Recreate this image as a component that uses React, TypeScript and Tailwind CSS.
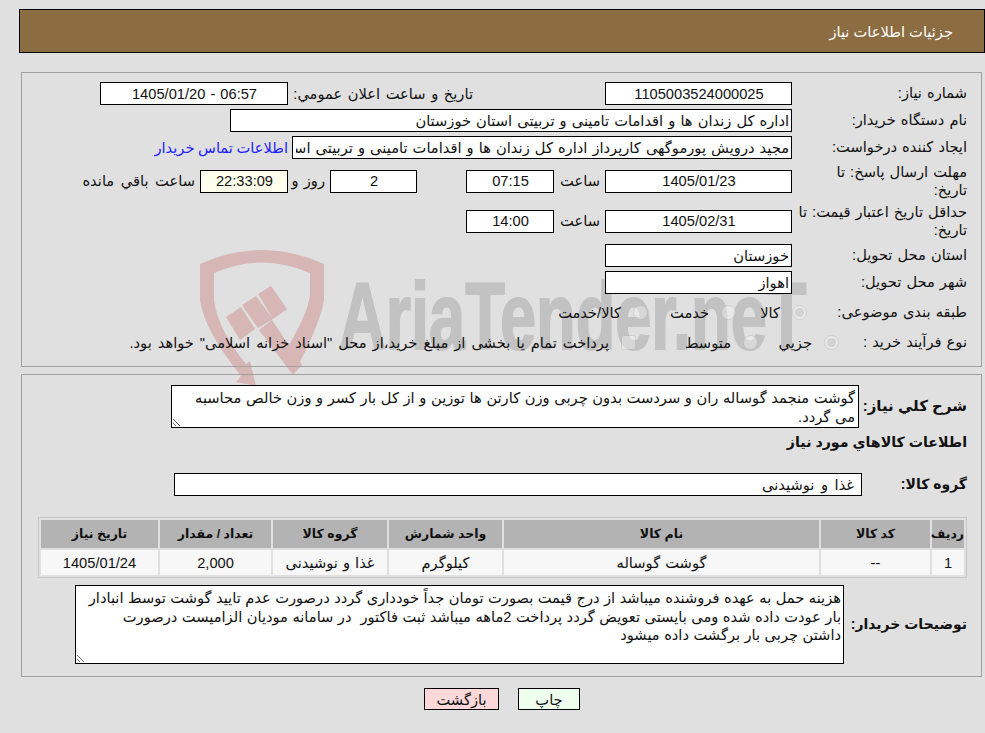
const font = "font-['Liberation_Sans','DejaVu_Sans',sans-serif]";
const box = "h-[23px] border border-black text-[14.67px] text-[#111] outline-none pl-[3px] pr-[2px] rounded-none [word-spacing:1px]";

function Box({ w, value, center = true, yellow = false, mr = "", ltr = false }: { w: string; value: string; center?: boolean; yellow?: boolean; mr?: string; ltr?: boolean }) {
  return (
    <input
      readOnly
      dir={ltr ? "ltr" : "rtl"}
      value={value}
      className={`${box} ${w} ${mr} ${center ? "text-center" : "text-right"} ${yellow ? "bg-[#ffffee]" : "bg-white"}`}
    />
  );
}

function Label({ children, w = "w-[175px]" }: { children: React.ReactNode; w?: string }) {
  return <div className={`${w} shrink-0 leading-[18.5px] pl-[5px]`}>{children}</div>;
}

function Radio({ checked = false }: { checked?: boolean }) {
  return <input type="radio" disabled checked={checked} readOnly className="m-0 h-[15px] w-[15px] shrink-0 opacity-60" />;
}

function Watermark() {
  return (
    <div className="absolute left-0 top-0 z-0 h-[420px] w-[985px] overflow-hidden">
      <svg className="absolute left-[190px] top-[240px]" width="140" height="160" viewBox="190 240 140 160" fill="#d7b6b6">
        <path d="M200 264 Q262 236 324 264 L324 300 Q320 325 293 375 L281 358 Q308 315 310 295 L310 273 Q262 252 214 273 L214 300 Q218 330 246 364 L250 361 L256 386 L236 382 L241 376 Q204 330 200 300 Z" />
        <path d="M226 317 L241 307 L255 329 L240 340 Z" />
        <path d="M242 305 L256 296 L273 319 L258 328 Z" />
        <path d="M258 294 L271 286 L287 309 L273 319 Z" />
        <path d="M259 330 L272 320 L302 365 L293 375 Z" />
      </svg>
      <div dir="ltr" className="absolute left-[339px] top-[252px] origin-left scale-x-[0.69] whitespace-nowrap font-['Liberation_Sans'] text-[94px] font-bold leading-[130px] text-[#c2c2c2] [-webkit-text-stroke:2px_#c2c2c2]">
        AriaTender.neT
      </div>
    </div>
  );
}

export default function App() {
  return (
    <div dir="rtl" className={`relative min-h-[733px] w-[985px] overflow-hidden bg-[#e0e0e0] pt-[9px] text-[14.67px] text-[#111] [word-spacing:1px] ${font}`}>
      <Watermark />
      <div className="relative z-10">
        <div className="ml-[19px] flex h-[44px] items-center border border-black bg-[#8c6d42] pr-[31px] pt-[1px] text-white [word-spacing:0px]">
          جزئيات اطلاعات نياز
        </div>

        <section className="ml-[21px] mr-[3px] mt-[19px] h-[295px] border border-[#a0a0a0] pr-[14px] pt-[9px]">
          <div className="flex h-[23px] items-center">
            <Label>شماره نياز:</Label>
            <Box w="w-[187px]" value="1105003524000025" />
            <div className="mr-[132px] w-[180px] whitespace-nowrap [word-spacing:1.5px]">تاريخ و ساعت اعلان عمومي:</div>
            <Box w="w-[188px]" mr="mr-[5px]" ltr value="1405/01/20 - 06:57" />
          </div>
          <div className="mt-[4px] flex h-[23px] items-center">
            <Label>نام دستگاه خريدار:</Label>
            <Box w="w-[562px]" center={false} value="اداره کل زندان ها و اقدامات تامینی و تربیتی استان خوزستان" />
          </div>
          <div className="mt-[4px] flex h-[23px] items-center">
            <Label>ايجاد كننده درخواست:</Label>
            <Box w="w-[500px]" center={false} value="مجيد درويش پورموگهی کارپرداز اداره کل زندان ها و اقدامات تامینی و تربیتی استان خوزستان" />
            <a className="mr-[4px] text-[#2222ff] [word-spacing:-0.5px]">اطلاعات تماس خريدار</a>
          </div>
          <div className="mt-[4px] flex h-[36px] items-center">
            <Label>مهلت ارسال پاسخ: تا<br />تاريخ:</Label>
            <Box w="w-[187px]" value="1405/01/23" />
            <div className="mr-[5px] w-[46px]">ساعت</div>
            <Box w="w-[88px]" value="07:15" />
            <Box w="w-[87px]" mr="mr-[49px]" value="2" />
            <div className="mr-[5px] w-[37px]">روز و</div>
            <Box w="w-[88px]" yellow value="22:33:09" />
            <div className="mr-[5px] [word-spacing:2.5px]">ساعت باقي مانده</div>
          </div>
          <div className="mt-[4px] flex h-[36px] items-center">
            <Label>حداقل تاريخ اعتبار قيمت: تا<br />تاريخ:</Label>
            <Box w="w-[187px]" value="1405/02/31" />
            <div className="mr-[5px] w-[46px]">ساعت</div>
            <Box w="w-[88px]" value="14:00" />
          </div>
          <div className="mt-[5px] flex h-[23px] items-center">
            <Label>استان محل تحويل:</Label>
            <Box w="w-[187px]" center={false} value="خوزستان" />
          </div>
          <div className="mt-[4px] flex h-[23px] items-center">
            <Label>شهر محل تحويل:</Label>
            <Box w="w-[187px]" center={false} value="اهواز" />
          </div>
          <div className="mt-[7px] flex h-[23px] items-center">
            <Label w="w-[160px]"><span className="whitespace-nowrap">طبقه بندی موضوعی:</span></Label>
            <div className="flex w-[71px] items-center gap-[12px]"><Radio checked /><span>كالا</span></div>
            <div className="flex w-[88px] items-center gap-[12px]"><Radio /><span>خدمت</span></div>
            <div className="flex items-center gap-[12px]"><Radio /><span>كالا/خدمت</span></div>
          </div>
          <div className="mt-[7px] flex h-[23px] items-center">
            <Label w="w-[128px]"><span className="whitespace-nowrap">نوع فرآيند خريد :</span></Label>
            <div className="flex w-[81px] items-center gap-[12px]"><Radio checked /><span>جزيي</span></div>
            <div className="flex w-[122px] items-center gap-[12px]"><Radio /><span>متوسط</span></div>
            <div className="flex items-center gap-[12px]">
              <input type="checkbox" disabled className="m-0 h-[15px] w-[15px] shrink-0 opacity-60" />
              <span className="[word-spacing:1.9px]">پرداخت تمام يا بخشی از مبلغ خريد،از محل "اسناد خزانه اسلامی" خواهد بود.</span>
            </div>
          </div>
        </section>

        <section className="ml-[21px] mr-[3px] mt-[7px] h-[303px] border border-[#a0a0a0] pr-[14px] pt-[10px]">
          <div className="flex h-[43px] items-center">
            <div className="w-[108px] shrink-0 whitespace-nowrap text-[15px] font-bold [word-spacing:0px]">شرح كلي نياز:</div>
            <textarea
              readOnly
              dir="rtl"
              className="h-[43px] w-[688px] rounded-none border border-black bg-white pr-[3px] pl-[12px] pt-[3px] text-[14.67px] leading-[19px] text-[#111] outline-none [word-spacing:0.55px]"
              defaultValue="گوشت منجمد گوساله ران و سردست بدون چربی وزن کارتن ها توزین و از کل بار کسر و وزن خالص محاسبه می گردد."
            />
          </div>
          <div className="mt-[5px] flex h-[20px] items-center whitespace-nowrap text-[14.2px] font-bold [word-spacing:0px]">اطلاعات كالاهاي مورد نياز</div>
          <div className="mt-[20px] flex h-[23px] items-center">
            <div className="w-[105px] shrink-0 whitespace-nowrap text-[14px] font-bold [word-spacing:0px]">گروه كالا:</div>
            <div className={`${box} flex w-[688px] items-center bg-white pr-[7px] [word-spacing:2.5px]`}>غذا و نوشيدنی</div>
          </div>
          <table className="mt-[21px] w-[928px] table-fixed border-separate border-spacing-[2px] border border-[#c6c6c6] text-center">
            <colgroup>
              <col className="w-[32px]" />
              <col className="w-[109px]" />
              <col className="w-[315px]" />
              <col className="w-[113px]" />
              <col className="w-[114px]" />
              <col className="w-[111px]" />
              <col className="w-[117px]" />
            </colgroup>
            <thead>
              <tr className="h-[28px] bg-[#b3b3b3] text-[12.5px] font-bold [word-spacing:0px]">
                <th className="p-0">رديف</th>
                <th className="p-0">كد كالا</th>
                <th className="p-0">نام كالا</th>
                <th className="p-0">واحد شمارش</th>
                <th className="p-0">گروه كالا</th>
                <th className="p-0">تعداد / مقدار</th>
                <th className="p-0">تاريخ نياز</th>
              </tr>
            </thead>
            <tbody>
              <tr className="h-[25px] bg-[#f7f7f7]">
                <td className="p-0">1</td>
                <td className="p-0">--</td>
                <td className="p-0">گوشت گوساله</td>
                <td className="p-0">كيلوگرم</td>
                <td className="p-0">غذا و نوشيدنی</td>
                <td className="p-0">2,000</td>
                <td className="p-0">1405/01/24</td>
              </tr>
            </tbody>
          </table>
          <div className="mt-[7px] flex h-[79px] items-center">
            <div className="w-[123px] shrink-0 whitespace-nowrap text-[14px] font-bold [word-spacing:0px]">توضيحات خريدار:</div>
            <textarea
              readOnly
              dir="rtl"
              className="h-[79px] w-[769px] rounded-none border border-black bg-white pr-[2px] pl-[12px] pt-[3px] text-[14.67px] leading-[18.5px] text-[#111] outline-none [word-spacing:0.4px]"
              defaultValue="هزينه حمل به عهده فروشنده میباشد از درج قیمت بصورت تومان جداً خودداری گردد درصورت عدم تایید گوشت توسط انبادار بار عودت داده شده ومی بایستی تعویض گردد پرداخت 2ماهه میباشد ثبت فاکتور  در سامانه مودیان الزامیست درصورت داشتن چربی بار برگشت داده میشود"
            />
          </div>
        </section>

        <div className="mt-[11px] flex h-[22px] justify-center gap-[19px] pl-[19px]">
          <button className="h-[22px] w-[62px] border border-black bg-[#eeffee]">چاپ</button>
          <button className="h-[22px] w-[75px] border border-black bg-[#ffd9d9]">بازگشت</button>
        </div>
      </div>
    </div>
  );
}
